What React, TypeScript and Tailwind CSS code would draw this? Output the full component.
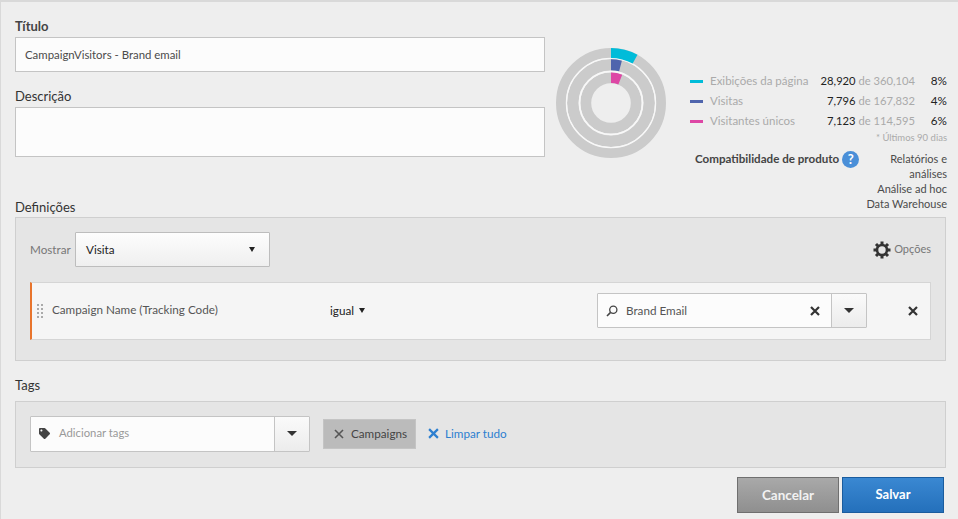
import React from "react";
import { FaTag } from "react-icons/fa";

const arc = (r: number, pct: number) => {
  const a = (pct / 100) * 2 * Math.PI;
  const x = 55 + r * Math.sin(a);
  const y = 55 - r * Math.cos(a);
  return `M55 ${55 - r} A${r} ${r} 0 0 1 ${x} ${y}`;
};

const Donut = () => (
  <svg width="110" height="110" viewBox="0 0 110 110" className="shrink-0">
    <circle cx="55" cy="55" r="50" fill="none" stroke="#cbcbcb" strokeWidth="10" />
    <circle cx="55" cy="55" r="38.2" fill="none" stroke="#cbcbcb" strokeWidth="11.4" />
    <circle cx="55" cy="55" r="25.2" fill="none" stroke="#cbcbcb" strokeWidth="10.8" />
    <circle cx="55" cy="55" r="44.6" fill="none" stroke="#f8f8f8" strokeWidth="1.2" />
    <circle cx="55" cy="55" r="31.5" fill="none" stroke="#f8f8f8" strokeWidth="1.6" />
    <path d={arc(50, 8)} fill="none" stroke="#00bcd9" strokeWidth="10" />
    <path d={arc(38.2, 4)} fill="none" stroke="#4f65ad" strokeWidth="11" />
    <path d={arc(25.2, 6)} fill="none" stroke="#dd47a5" strokeWidth="10.4" />
  </svg>
);

const GearIcon = () => (
  <svg width="18" height="18" viewBox="0 0 18 18" className="text-[#333]">
    <circle cx="9" cy="9" r="5" fill="none" stroke="currentColor" strokeWidth="2.6" />
    {[0, 45, 90, 135].map((deg) => (
      <path key={deg} d="M9 0.5 V17.5" stroke="currentColor" strokeWidth="3" transform={`rotate(${deg} 9 9)`} strokeDasharray="3.5 10 3.5" />
    ))}
  </svg>
);

const XIcon = ({ size = 10, width = 2.2, className = "" }: { size?: number; width?: number; className?: string }) => (
  <svg width={size} height={size} viewBox="0 0 10 10" className={className}>
    <path d="M1 1 L9 9 M9 1 L1 9" stroke="currentColor" strokeWidth={width} fill="none" />
  </svg>
);

const SearchIcon = () => (
  <svg width="12" height="12" viewBox="0 0 12 12" className="text-[#444]">
    <circle cx="7.3" cy="4.7" r="3.6" fill="none" stroke="currentColor" strokeWidth="1.3" />
    <path d="M4.6 7.4 L1 11" stroke="currentColor" strokeWidth="1.6" fill="none" />
  </svg>
);

const Caret = () => (
  <span className="w-0 h-0 border-l-[5px] border-r-[5px] border-t-[5px] border-l-transparent border-r-transparent border-t-[#333]" />
);

const SmallCaret = () => (
  <span className="w-0 h-0 border-l-[3px] border-r-[3px] border-t-[5px] border-l-transparent border-r-transparent border-t-[#222]" />
);

const stats = [
  { color: "bg-[#00bcd9]", label: "Exibições da página", value: "28,920", total: "360,104", pct: "8%" },
  { color: "bg-[#4f65ad]", label: "Visitas", value: "7,796", total: "167,832", pct: "4%" },
  { color: "bg-[#dd47a5]", label: "Visitantes únicos", value: "7,123", total: "114,595", pct: "6%" },
];

export default function App() {
  return (
    <div
      className="w-[958px] h-[519px] overflow-hidden bg-[#eeeeee] border-t-2 border-l border-[#d9d9d9] pl-[14px] text-[11.7px] text-[#4b4b4b]"
      style={{ fontFamily: "Lato, 'Open Sans', sans-serif" }}
    >
      <div className="flex h-[215px]">
        <div className="w-[530px] shrink-0">
          <div className="pt-[16px] box-content h-[16px] text-[13px] leading-[16px] font-bold text-[#444]">Título</div>
          <div className="mt-[3px] h-[35px] border border-[#c4c4c4] bg-[#fcfcfc] flex items-center pl-[9px] text-[11.4px]">CampaignVisitors - Brand email</div>
          <div className="mt-[16px] text-[13px] leading-[16px] text-[#333]">Descrição</div>
          <div className="mt-[3px] h-[50px] border border-[#c4c4c4] bg-[#fcfcfc]" />
          <div className="mt-[42px] text-[13px] leading-[16px] text-[#333]">Definições</div>
        </div>
        <div className="ml-[11px] pt-[46px]">
          <Donut />
        </div>
        <div className="ml-[24px] w-[257px] pt-[69px]">
          {stats.map((s) => (
            <div key={s.label} className="h-[20px] flex items-center">
              <span className={`w-[13px] h-[3px] ${s.color}`} />
              <span className="ml-[7px] text-[#aaaaaa] text-[11.5px] whitespace-nowrap">{s.label}</span>
              <span className="ml-auto text-[#222] text-[11.2px] whitespace-nowrap">
                {s.value} <span className="text-[#aaaaaa]">de {s.total}</span>
              </span>
              <span className="w-[32px] text-right text-[#222]">{s.pct}</span>
            </div>
          ))}
          <div className="text-right text-[9.5px] leading-[12px] mt-[1px] text-[#aaaaaa]">* Últimos 90 dias</div>
          <div className="flex mt-[7px] pl-[5px]">
            <div className="flex items-start h-[18px] shrink-0">
              <span className="font-bold text-[11.6px] leading-[16px] text-[#444] whitespace-nowrap">Compatibilidade de produto</span>
              <span className="ml-[3px] w-[17px] h-[17px] rounded-full bg-[#4a8fd8] text-white font-bold text-[13px] leading-[17px] text-center">?</span>
            </div>
            <div className="ml-auto w-[84px] text-right leading-[15px] text-[11px] text-[#4b4b4b]">
              <div>Relatórios e análises</div>
              <div>Análise ad hoc</div>
              <div className="whitespace-nowrap">Data Warehouse</div>
            </div>
          </div>
        </div>
      </div>

      <div className="w-[931px] h-[144px] border border-[#cfcfcf] bg-[#e5e5e5] px-[14px] pt-[14px]">
        <div className="flex items-center h-[35px]">
          <span className="text-[#777] w-[45px]">Mostrar</span>
          <div className="w-[195px] h-[35px] border border-[#bdbdbd] rounded-[1px] bg-gradient-to-b from-[#fdfdfd] to-[#efefef] flex items-center justify-between pl-[10px] pr-[14px] text-[#222]">
            <span>Visita</span>
            <SmallCaret />
          </div>
          <div className="ml-auto flex items-center gap-[3px] text-[#777] text-[11px]">
            <GearIcon />
            <span>Opções</span>
          </div>
        </div>
        <div className="mt-[15px] w-[901px] h-[58px] border border-[#d5d5d5] border-l-[2px] border-l-[#e8742c] bg-[#f5f5f5] flex items-center">
          <div className="ml-[5px] grid grid-cols-2 gap-x-[2px] gap-y-[2px] mt-[-1px]">
            {Array.from({ length: 8 }).map((_, i) => (
              <span key={i} className="w-[2px] h-[2px] bg-[#aaaaaa]" />
            ))}
          </div>
          <span className="ml-[9px] w-[278px] text-[#555] mt-[-3px]">Campaign Name (Tracking Code)</span>
          <span className="w-[267px] text-[#222] flex items-center gap-[5px]">
            igual <SmallCaret />
          </span>
          <div className="w-[270px] h-[35px] flex border border-[#c4c4c4] bg-[#fcfcfc] rounded-[1px] mt-[-1px]">
            <div className="flex-1 flex items-center pl-[8px] pr-[11px]">
              <SearchIcon />
              <span className="ml-[8px] text-[#555]">Brand Email</span>
              <XIcon className="ml-auto text-[#333]" />
            </div>
            <div className="w-[35px] border-l border-[#c4c4c4] bg-gradient-to-b from-[#fafafa] to-[#ececec] flex items-center justify-center">
              <Caret />
            </div>
          </div>
          <XIcon className="ml-[41px] text-[#333]" />
        </div>
      </div>

      <div className="mt-[16px] text-[13px] leading-[16px] text-[#333]">Tags</div>
      <div className="mt-[8px] w-[931px] h-[67px] border border-[#cfcfcf] bg-[#e5e5e5] px-[14px] pb-[2px] flex items-center">
        <div className="w-[280px] h-[36px] flex border border-[#c4c4c4] bg-[#fcfcfc] rounded-[1px]">
          <div className="flex-1 flex items-center pl-[8px]">
            <FaTag className="text-[#444] text-[11px]" />
            <span className="ml-[9px] text-[#999] text-[11.3px]">Adicionar tags</span>
          </div>
          <div className="w-[35px] border-l border-[#c4c4c4] bg-gradient-to-b from-[#fafafa] to-[#ececec] flex items-center justify-center">
            <Caret />
          </div>
        </div>
        <div className="ml-[13px] w-[93px] h-[30px] bg-[#bbbbbb] border border-[#c4c4c4] flex items-center pl-[10px] text-[#444]">
          <XIcon size={10} width={1.6} className="text-[#555]" />
          <span className="ml-[7px]">Campaigns</span>
        </div>
        <XIcon size={11} width={2} className="ml-[12px] text-[#2d7fd0]" />
        <span className="ml-[6px] text-[#2d7fd0]">Limpar tudo</span>
      </div>

      <div className="mt-[9px] w-[929px] flex justify-end gap-[3px]">
        <button className="w-[102px] h-[36px] border border-[#6f6f6f] bg-gradient-to-b from-[#a9a9a9] to-[#8f8f8f] text-[#f2f2f2] font-bold text-[13.5px]">Cancelar</button>
        <button className="w-[102px] h-[36px] border border-[#1a5c9e] bg-gradient-to-b from-[#3a88d2] to-[#2470bb] text-white font-bold text-[13px]">Salvar</button>
      </div>
    </div>
  );
}
